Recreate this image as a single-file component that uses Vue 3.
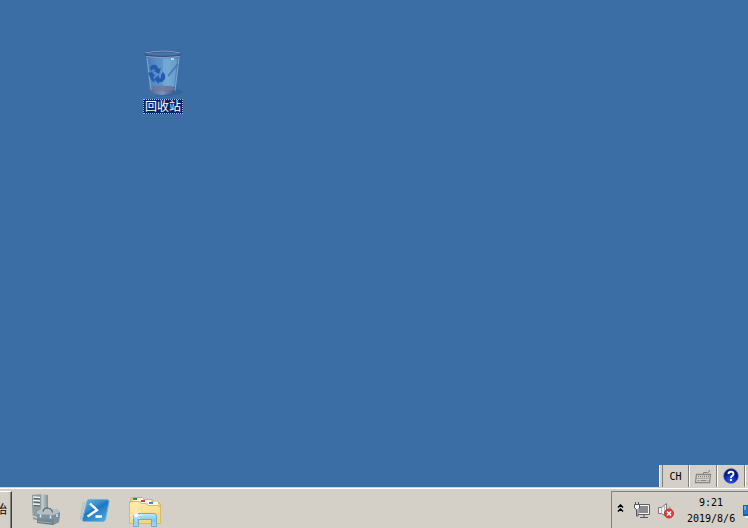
<script setup>
</script>

<template>
  <main class="screen">
    <section class="desktop">
      <div class="shortcut">
        <svg class="bin" width="40" height="48" viewBox="0 0 40 48">
          <defs>
            <linearGradient id="glass" x2="1"><stop stop-color="#4678b3" /><stop offset=".25" stop-color="#5c90c8" /><stop offset=".65" stop-color="#70a5d4" /><stop offset="1" stop-color="#477baf" /></linearGradient>
            <linearGradient id="base" x2="1"><stop stop-color="#526990" /><stop offset=".5" stop-color="#8290b3" /><stop offset="1" stop-color="#3d5681" /></linearGradient>
          </defs>
          <ellipse cx="25" cy="43" rx="14" ry="4" fill="#315a8a" opacity=".45" />
          <path d="M3 5L7 42Q19 49 32 42L37 5Z" fill="url(#glass)" opacity=".85" />
          <path d="M20 10H34L31 38H20Z" fill="#7fb5dd" opacity=".5" />
          <path d="M7 38Q19 35 32 38L32 43Q19 49 7 43Z" fill="url(#base)" />
          <ellipse cx="19.500" cy="39.500" rx="12.500" ry="2.800" fill="#6d7aa4" opacity=".8" />
          <ellipse cx="20" cy="5" rx="17.500" ry="2.600" fill="#4476ae" stroke="#3a5285" stroke-width="1.800" />
          <path d="M2.500 4Q20 0 37.500 4M3 7.500Q20 10 37 7.500" fill="none" stroke="#8ea4ca" stroke-width=".9" />
          <path d="M4 9L8 41M36 9L32 42" fill="none" stroke="#94b9de" opacity=".7" />
          <path d="M35 15L25 27" stroke="#4472aa" stroke-width="1.200" />
          <path d="M28 9h3v2h-3z" fill="#b4d8ed" />
          <g fill="#245bb1"><path d="M7 18Q9 15 13 16L16 20 18 19 16 25 11 22 13 21 10 20 8 22Z" /><path d="M5 24L9 23 12 27 10 28 12 33 9 32Z" /><path d="M20 23Q23 26 22 30L19 33H16V35L11 30 16 26V29H18L18 26Z" /></g>
        </svg>
        <span class="label">回收站</span>
      </div>
      <div class="langbar">
        <span class="ch">CH</span>
        <span class="keyboard">
          <svg width="18" height="16" viewBox="0 0 18 16" fill="none">
            <path d="M9.500 7V4.500H13.500Q15.500 4.500 15.500 2" stroke="#858585" />
            <path d="M2.500 6.500H16.500L15.500 14.500H1.500Z" fill="#e4e1db" stroke="#858585" stroke-width="1.300" />
            <path d="M4 8.500h11M3.500 10.500h11" stroke="#858585" stroke-width="1.300" stroke-dasharray="1.200 .8" /><path d="M3.500 12.500h2m1 0h6m1 0h1" stroke="#858585" />
          </svg>
        </span>
        <span class="help">
          <svg width="16" height="16" viewBox="0 0 16 16">
            <defs><radialGradient id="ball" cx=".45" cy=".75"><stop stop-color="#345fff" /><stop offset=".5" stop-color="#1237cf" /><stop offset="1" stop-color="#061779" /></radialGradient></defs>
            <circle cx="8" cy="8" r="7.400" fill="url(#ball)" stroke="#6f7da8" stroke-width=".7" />
            <path d="M5.500 6Q5.500 3.700 8 3.700T10.500 6Q10.500 7 9 8Q8 8.500 8 10" fill="none" stroke="#fff" stroke-width="1.900" /><path d="M7 11h2v2H7z" fill="#fff" />
          </svg>
        </span>
      </div>
    </section>

    <footer class="taskbar">
      <div class="start"><span>始</span></div>
      <nav class="pins">
        <svg class="server" width="30" height="34" viewBox="0 0 30 34">
          <defs>
            <linearGradient id="rack" x2="1"><stop stop-color="#7d878a" /><stop offset=".55" stop-color="#a7b0b2" /><stop offset=".65" stop-color="#c5cdcd" /><stop offset="1" stop-color="#7f8e92" /></linearGradient>
            <linearGradient id="case" x2="0" y2="1"><stop stop-color="#a9b8bf" /><stop offset="1" stop-color="#5c737e" /></linearGradient>
          </defs>
          <path d="M1 2L10 1 17 2V26L10 28 2 26Z" fill="url(#rack)" />
          <path d="M1 2L10 2V28L2 26Z" fill="#929da0" />
          <path d="M2 4l7 .5M2 7.500l7 .5M2 11l7 .5" stroke="#edf1f0" stroke-width="1.400" />
          <path d="M3 5.500l6 .5M3 9l6 .5M3 12.500l6 .5" stroke="#4f5b60" />
          <path d="M2 23.500l4 1" stroke="#e3e7e6" />
          <path d="M6 19L10 16 26 16 29 19 28 29 22 32 6 30Z" fill="url(#case)" />
          <path d="M6 19L10 16 26 16 29 19 24 22 6 21Z" fill="#b2c0c6" />
          <path d="M23 22L29 19 28 29 22 32Z" fill="#7e929c" />
          <path d="M6 22L23 23.500 29 20.500" fill="none" stroke="#6f848e" stroke-width=".8" />
          <path d="M12 18.500Q13 14.500 17 15Q21 15.500 21.500 19.500" fill="none" stroke="#58676e" stroke-width="1.200" />
          <path d="M9.500 21.500v3M19.500 22.500v3M26 21v3" stroke="#e0e5e6" stroke-width="1.500" />
          <path d="M7 28.500l14 1.500" stroke="#9badb7" />
        </svg>
        <svg class="powershell" width="31" height="26" viewBox="0 0 31 26">
          <defs><linearGradient id="shell" x2=".7" y2="1"><stop stop-color="#63b8e2" /><stop offset=".45" stop-color="#3288c8" /><stop offset=".5" stop-color="#2375bd" /><stop offset="1" stop-color="#3fa8df" /></linearGradient></defs>
          <path d="M3 4L0 22M5 3L1 22" stroke="#82aac7" opacity=".4" />
          <path d="M8.500 1.500H27Q29.500 1.500 29 4L25.500 21.500Q25 23.500 23 23.500H4Q2 23.500 2.500 21L7 3.500Q7.500 1.500 8.500 1.500Z" fill="url(#shell)" stroke="#78b1d4" />
          <path d="M10 5.500L17 12L7.500 18.500M15.500 18.500H22" fill="none" stroke="#fff" stroke-width="2.300" />
        </svg>
        <svg class="explorer" width="34" height="32" viewBox="0 0 34 32">
          <defs><linearGradient id="folder" x2=".3" y2="1"><stop stop-color="#fff0ad" /><stop offset="1" stop-color="#efd680" /></linearGradient><linearGradient id="stand" x2="0" y2="1"><stop stop-color="#c8e8f3" /><stop offset=".5" stop-color="#83c8e6" /><stop offset="1" stop-color="#a3dbf0" /></linearGradient></defs>
          <path d="M1.500 7L3.500 1.500H14.500L16.500 3.500H24L26 6.500H31L32.500 9V27H1.500Z" fill="#efd782" stroke="#cfb061" />
          <path d="M5 2h10v3H5zM13 4h10v3H13zM20 6h10v3H20z" fill="#fffde8" />
          <path d="M5 2h4v2H5z" fill="#16a424" /><path d="M13 4h4v2h-4z" fill="#d6412a" /><path d="M21 6h4v2h-4z" fill="#2793d0" />
          <path d="M1.500 7.500L3 5.500H11L13 7.500H18L20 9.500H29L32.500 11V27.500H1.500Z" fill="url(#folder)" stroke="#dabb69" />
          <path d="M5.500 30.500V20Q5.500 17.500 8 17.500H26Q28.500 17.500 28.500 20V30.500H23.500V23.500H10.500V30.500Z" fill="url(#stand)" stroke="#73acc5" />
          <path d="M8 12v14M2 19h13M4 15l8 8M12 15l-8 8" stroke="#fff" opacity=".65" />
          <circle cx="8" cy="19" r="2" fill="#fff" opacity=".8" />
        </svg>
      </nav>
      <aside class="tray">
        <svg class="chevrons" width="7" height="9" viewBox="0 0 7 9" fill="none" stroke="#000" stroke-width="1.500"><path d="M1 3.500L3.500 1L6 3.500M1 7.500L3.500 5L6 7.500" /></svg>
        <svg class="network" width="17" height="17" viewBox="0 0 17 17">
          <path d="M3.500 2.500H15.500V12.500H3.500Z" fill="#f6f6f6" stroke="#606060" /><path d="M5 4h9v7H5z" fill="#8b8b8b" />
          <path d="M10 13v2M6 15.500h8" stroke="#555" /><path d="M.5 2.500h5V6L4 7.500V14H2.500V7.500L.5 6Z" fill="#fff" stroke="#555" /><path d="M1.500 0v3M4.500 0v3" stroke="#555" />
        </svg>
        <svg class="volume" width="17" height="17" viewBox="0 0 17 17">
          <path d="M.5 5.500H3.500L8.500 1.500V14.500L3.500 11.500H.5Z" fill="#f5f5f5" stroke="#777" /><path d="M3.500 6v5M6.500 4v9" stroke="#bbb" /><path d="M11 4Q13 6 12 8" fill="none" stroke="#999" />
          <circle cx="11" cy="11.500" r="4.500" fill="#e23e3a" stroke="#bd3333" /><path d="M9 9.500l4 4m0-4l-4 4" stroke="#fff" stroke-width="1.600" />
        </svg>
        <div class="clock"><time>9:21</time><time>2019/8/6</time></div>
        <svg class="peek" width="5" height="15" viewBox="0 0 5 15"><path d="M0 1H5V12H0Z" fill="#245aa2" /><path d="M1 2H5V10H1Z" fill="#2479d1" /><path d="M1 2h2v4H1z" fill="#66b2e8" /><path d="M2 12h3v2H2z" fill="#e8edf1" /></svg>
      </aside>
    </footer>
  </main>
</template>

<style>
body { margin: 0; overflow: hidden; }
</style>

<style scoped>
* { box-sizing: border-box; }
svg { display: block; flex: none; }
.screen { width: 748px; height: 528px; display: flex; flex-direction: column; overflow: hidden; background: #3a6ea5; color: #000; font: 10px "DejaVu Sans Mono", "Noto Sans CJK SC", monospace; }
.desktop { height: 487px; display: flex; flex-direction: column; justify-content: space-between; }
.shortcut { width: 54px; margin: 49px 0 0 136px; display: flex; flex-direction: column; align-items: center; }
.bin { margin-bottom: 2px; }
.label { width: 40px; height: 15px; padding-left: 1px; line-height: 11px; font-size: 12px; font-family: "Noto Sans CJK SC", sans-serif; color: #fff; background: #0a246a; border: 1px dotted #e8b27a; white-space: nowrap; }
.langbar { width: 89px; height: 22px; align-self: flex-end; display: flex; background: #d4d0c8; border-left: 1px solid #f6f4ef; }
.langbar span { display: flex; flex: none; align-items: center; justify-content: center; height: 22px; border-right: 1px solid #808080; box-shadow: 1px 0 #fff; }
.langbar .ch { width: 29px; padding-left: 1px; border-left: 2px solid #d4d0c8; box-shadow: inset 1px 0 #808080, 1px 0 #fff; }
.langbar .keyboard { width: 28px; padding-left: 1px; }
.langbar .help { width: 28px; padding-left: 1px; }
.taskbar { height: 41px; display: flex; background: #d4d0c8; border-top: 1px solid #d4d0c8; box-shadow: inset 0 1px #fff; }
.start { width: 12px; height: 38px; margin-top: 3px; display: flex; justify-content: flex-end; overflow: hidden; border-top: 1px solid #fff; border-right: 1px solid #404040; box-shadow: inset -1px 0 #808080; }
.start span { padding: 9px 4px 0 0; font-size: 12px; line-height: 16px; font-family: "Noto Sans CJK SC", sans-serif; }
.pins { display: flex; align-items: flex-start; margin-left: 19px; }
.server { margin-top: 5px; }
.powershell { margin: 10px 0 0 19px; }
.explorer { margin: 8px 0 0 17px; }
.tray { width: 137px; height: 37px; margin: 3px 0 0 auto; padding-left: 5px; display: flex; align-items: flex-start; border-left: 1px solid #808080; border-top: 1px solid #808080; }
.chevrons { margin-top: 12px; }
.network { margin: 10px 0 0 10px; }
.volume { margin: 10px 0 0 7px; }
.clock { width: 50px; margin: 3px 0 0 12px; display: flex; flex-direction: column; align-items: center; line-height: 16px; white-space: nowrap; }
.peek { margin: 12px 0 0 8px; }
</style>
